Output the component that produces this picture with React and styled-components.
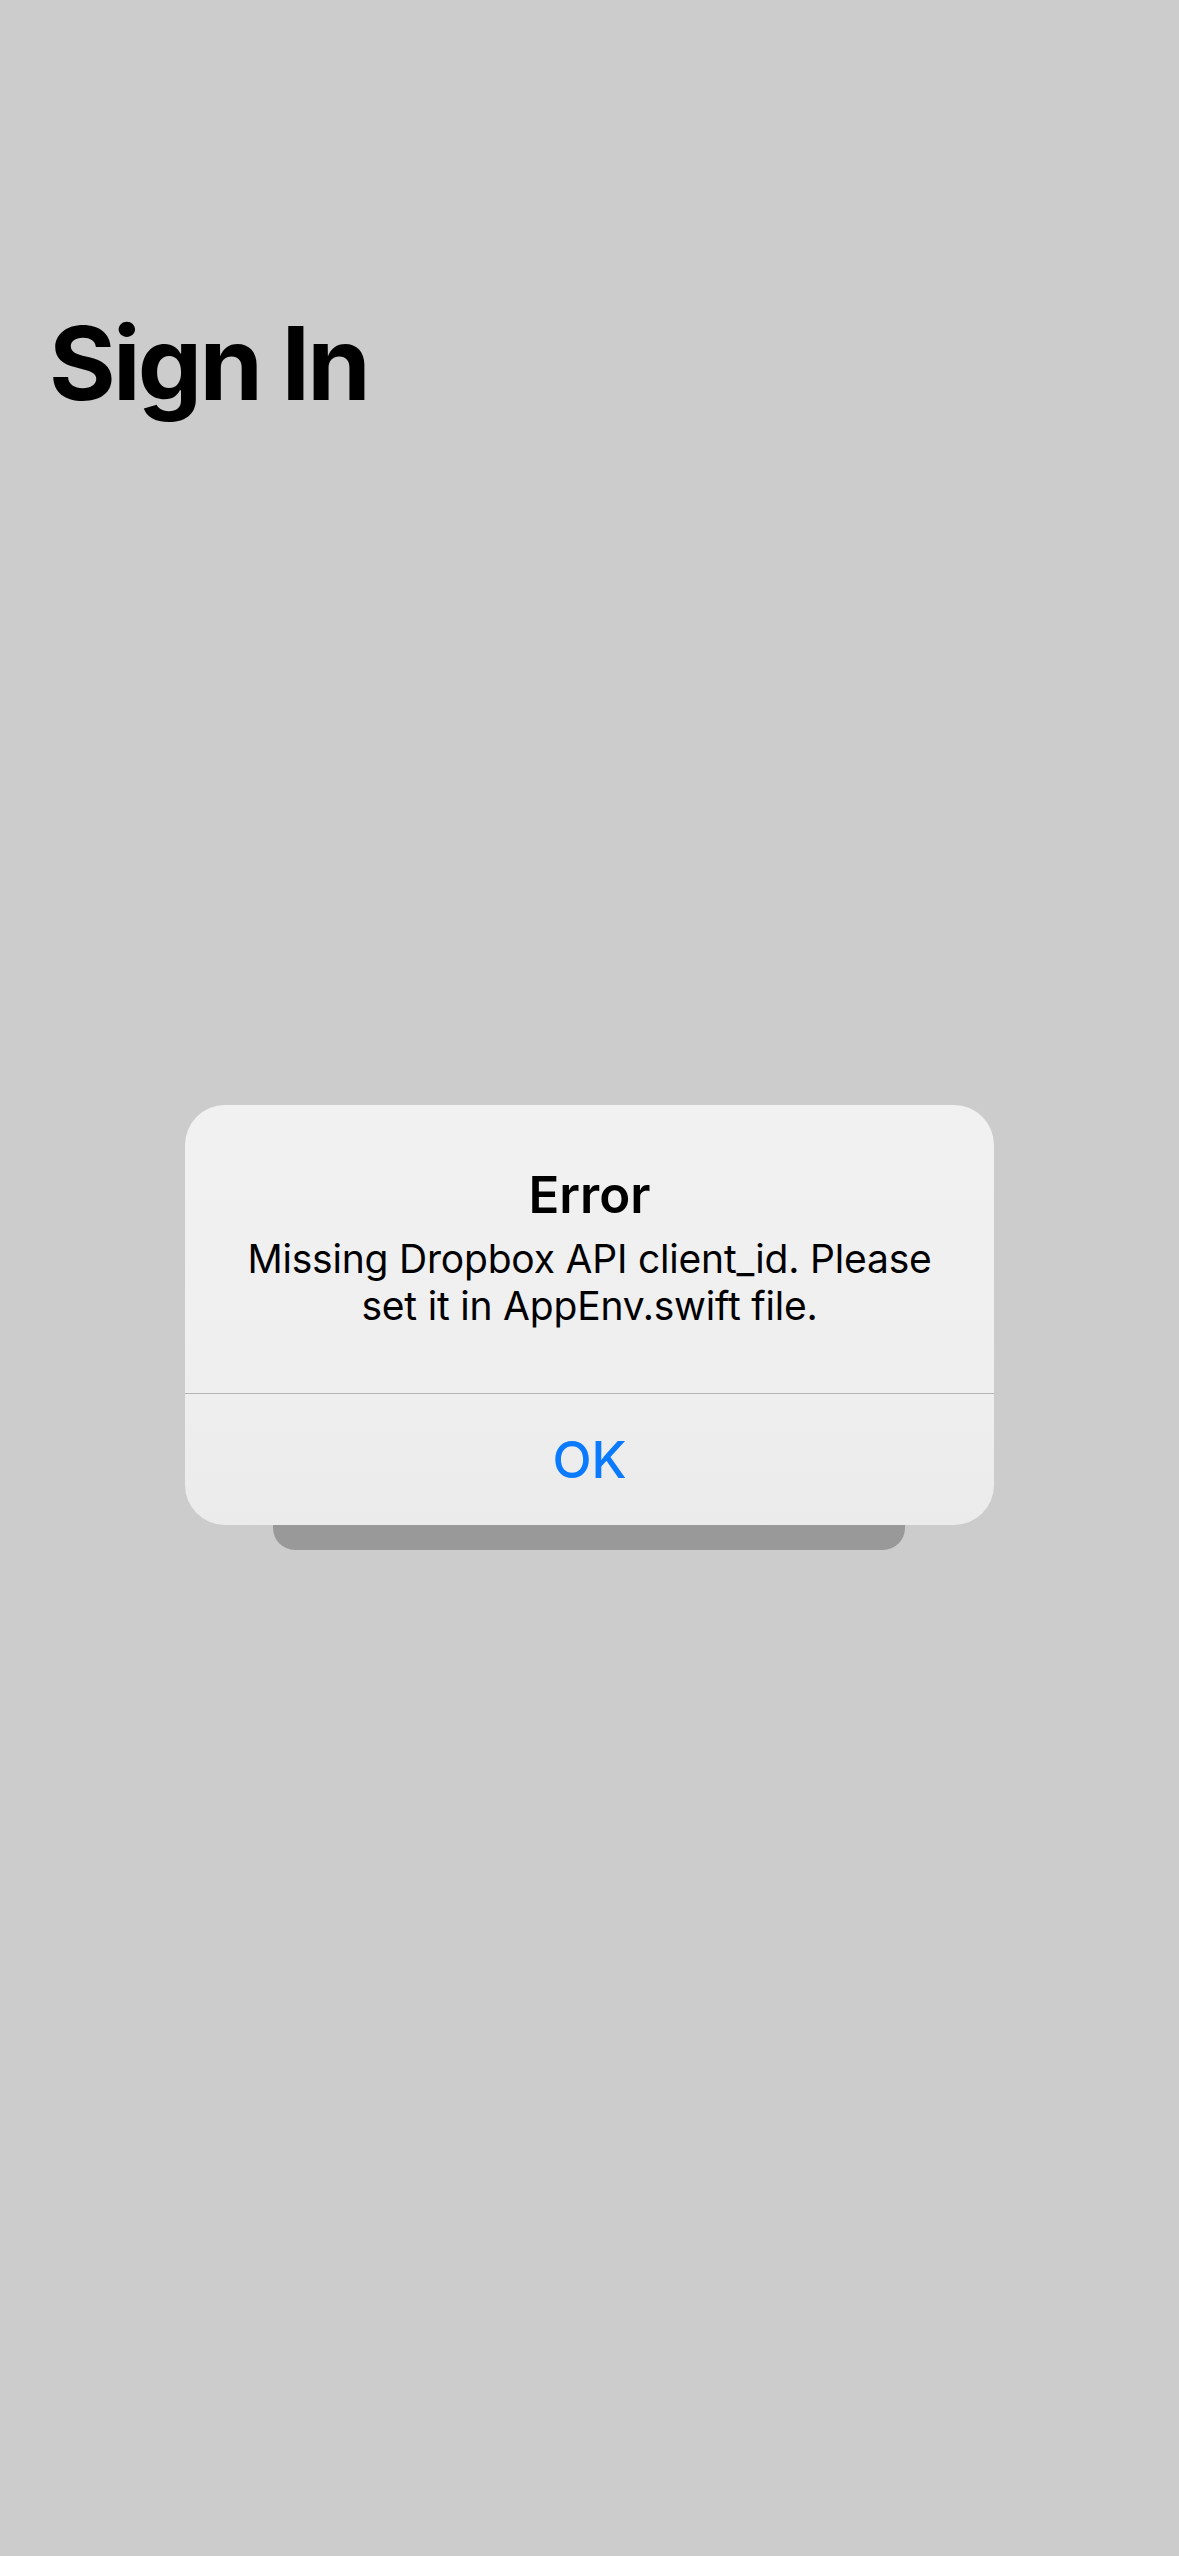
import React from "react";
import styled, { createGlobalStyle } from "styled-components";

const GlobalStyle = createGlobalStyle`
  html, body {
    margin: 0;
    padding: 0;
    background: #cccccc;
  }
  body {
    font-family: Inter, "Noto Sans", "Liberation Sans", sans-serif;
    -webkit-font-smoothing: antialiased;
  }
`;

const Screen = styled.div`
  width: 1179px;
  height: 2556px;
  background: #cccccc;
  display: flex;
  flex-direction: column;
  align-items: center;
  overflow: hidden;
`;

const Header = styled.h1`
  align-self: stretch;
  margin: 0;
  padding: 302px 0 0 49px;
  font-size: 102px;
  line-height: 122px;
  font-weight: 700;
  letter-spacing: -2.8px;
  color: #000;
`;

const AlertWrap = styled.div`
  position: relative;
  margin-top: 681px;
  width: 809px;
`;

const BackPlate = styled.div`
  position: absolute;
  left: 88px;
  right: 89px;
  bottom: -25px;
  height: 80px;
  background: #999999;
  border-radius: 22px;
`;

const Alert = styled.div`
  position: relative;
  display: flex;
  flex-direction: column;
  background: linear-gradient(180deg, #f1f1f1 0%, #efefef 60%, #ebebeb 100%);
  border-radius: 40px;
  overflow: hidden;
`;

const AlertBody = styled.div`
  display: flex;
  flex-direction: column;
  align-items: center;
  gap: 10px;
  padding: 59px 48px 64px;
  text-align: center;
`;

const AlertTitle = styled.div`
  font-size: 51px;
  line-height: 61px;
  font-weight: 600;
  color: #000;
`;

const AlertMessage = styled.div`
  font-size: 39px;
  line-height: 47px;
  font-weight: 400;
  letter-spacing: -0.2px;
  color: #000;
`;

const Divider = styled.div`
  height: 1px;
  background: #b4b4b4;
`;

const AlertButton = styled.button`
  height: 131px;
  border: none;
  background: transparent;
  font-family: inherit;
  font-size: 51px;
  line-height: 61px;
  font-weight: ${(p) => (p.$bold ? 600 : 500)};
  color: #0a7aff;
  padding: 0;
  cursor: pointer;
`;

export default function App() {
  return (
    <>
      <GlobalStyle />
      <Screen>
        <Header>Sign In</Header>
        <AlertWrap>
          <BackPlate />
          <Alert>
            <AlertBody>
              <AlertTitle>Error</AlertTitle>
              <AlertMessage>
                Missing Dropbox API client_id. Please
                <br />
                set it in AppEnv.swift file.
              </AlertMessage>
            </AlertBody>
            <Divider />
            <AlertButton>OK</AlertButton>
          </Alert>
        </AlertWrap>
      </Screen>
    </>
  );
}
